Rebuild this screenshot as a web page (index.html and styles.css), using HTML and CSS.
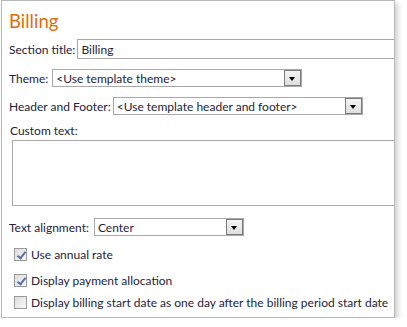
FILE: index.html
```html
<!DOCTYPE html>
<html lang="en">
<head>
  <meta charset="UTF-8" />
  <title>Billing</title>
  <link rel="stylesheet" href="styles.css">
</head>
<body>
  <div class="panel">
    <h1>Billing</h1>

    <div class="row row-title">
      <label>Section title:</label>
      <input class="text-input" type="text" value="Billing" />
    </div>

    <div class="row row-theme">
      <label>Theme:</label>
      <div class="dropdown dd-theme">
        <span class="dd-value">&lt;Use template theme&gt;</span>
        <span class="dd-button"></span>
      </div>
    </div>

    <div class="row row-header">
      <label>Header and Footer:</label>
      <div class="dropdown dd-header">
        <span class="dd-value">&lt;Use template header and footer&gt;</span>
        <span class="dd-button"></span>
      </div>
    </div>

    <div class="custom-label">Custom text:</div>
    <textarea class="custom-text"></textarea>

    <div class="row row-align">
      <label>Text alignment:</label>
      <div class="dropdown dd-align">
        <span class="dd-value">Center</span>
        <span class="dd-button"></span>
      </div>
    </div>

    <div class="check-row check-1">
      <span class="check checked"></span>
      <span>Use annual rate</span>
    </div>
    <div class="check-row check-2">
      <span class="check checked"></span>
      <span>Display payment allocation</span>
    </div>
    <div class="check-row check-3">
      <span class="check"></span>
      <span>Display billing start date as one day after the billing period start date</span>
    </div>
  </div>
</body>
</html>
```

FILE: styles.css
```css
body {
  margin: 0;
  background: #fff;
  font-family: Lato, "Noto Sans", sans-serif;
  font-size: 12px;
  color: #25233a;
}

.panel {
  margin-left: 1px;
  width: 394px;
  height: 318px;
  border: 1px solid #b9b9b9;
  box-shadow: 3px 3px 5px rgba(0, 0, 0, 0.18);
  padding: 0 0 0 7px;
  overflow: hidden;
  box-sizing: border-box;
}

h1 {
  margin: 8px 0 0 0;
  font-size: 18.5px;
  font-weight: normal;
  color: #e36c0a;
  line-height: 24px;
}

.row {
  display: flex;
  align-items: center;
}

.row label {
  white-space: nowrap;
  margin-right: 3px;
}

.row-title {
  margin-top: 6px;
}

.row-title label {
  margin-right: 2px;
}

.text-input {
  flex: 1;
  height: 20px;
  box-sizing: border-box;
  border: 1px solid #a8a8a8;
  border-right: none;
  padding: 0 3px;
  font-family: inherit;
  font-size: 12px;
  color: #25233a;
  outline: none;
}

.row-theme {
  margin-top: 10px;
}

.row-theme label {
  margin-right: 4px;
}

.row-header {
  margin-top: 10px;
}

.row-header label {
  margin-right: 2px;
}

.row-align {
  margin-top: 12px;
}

.row-align label {
  margin-right: 5px;
}

.dropdown {
  display: flex;
  align-items: center;
  height: 18px;
  box-sizing: border-box;
  border: 1px solid #a8a8a8;
  padding-left: 3px;
}

.dd-value {
  flex: 1;
  white-space: nowrap;
  overflow: hidden;
}

.dd-button {
  width: 17px;
  height: 16px;
  box-sizing: border-box;
  border: 1px solid #7b7b7b;
  background: linear-gradient(#f4f4f4, #dedede);
  position: relative;
}
.dd-button::after {
  content: "";
  position: absolute;
  left: 4px;
  top: 6px;
  border-left: 3.5px solid transparent;
  border-right: 3.5px solid transparent;
  border-top: 4px solid #000;
}

.dd-theme {
  width: 250px;
}

.dd-header {
  width: 250px;
}

.dd-align {
  width: 150px;
}

.custom-label {
  margin-top: 8px;
  margin-left: 1px;
}

.custom-text {
  display: block;
  margin: 2px 0 0 3px;
  width: 390px;
  height: 66px;
  box-sizing: border-box;
  border: 1px solid #a8a8a8;
  border-right: none;
  resize: none;
  outline: none;
}

.check-row {
  display: flex;
  align-items: center;
  margin-left: 5px;
  gap: 4px;
}

.check-1 {
  margin-top: 11px;
}

.check-2 {
  margin-top: 11px;
}

.check-3 {
  margin-top: 7px;
}

.check {
  width: 13px;
  height: 13px;
  box-sizing: border-box;
  border: 1px solid #9a9a9a;
  background: linear-gradient(135deg, #dcdcdc, #f8f8f8);
  position: relative;
}
.check.checked::after {
  content: "";
  position: absolute;
  left: 3.5px;
  top: 0.5px;
  width: 3px;
  height: 7px;
  border-right: 2px solid #5a6ea8;
  border-bottom: 2px solid #5a6ea8;
  transform: rotate(38deg);
}
```
